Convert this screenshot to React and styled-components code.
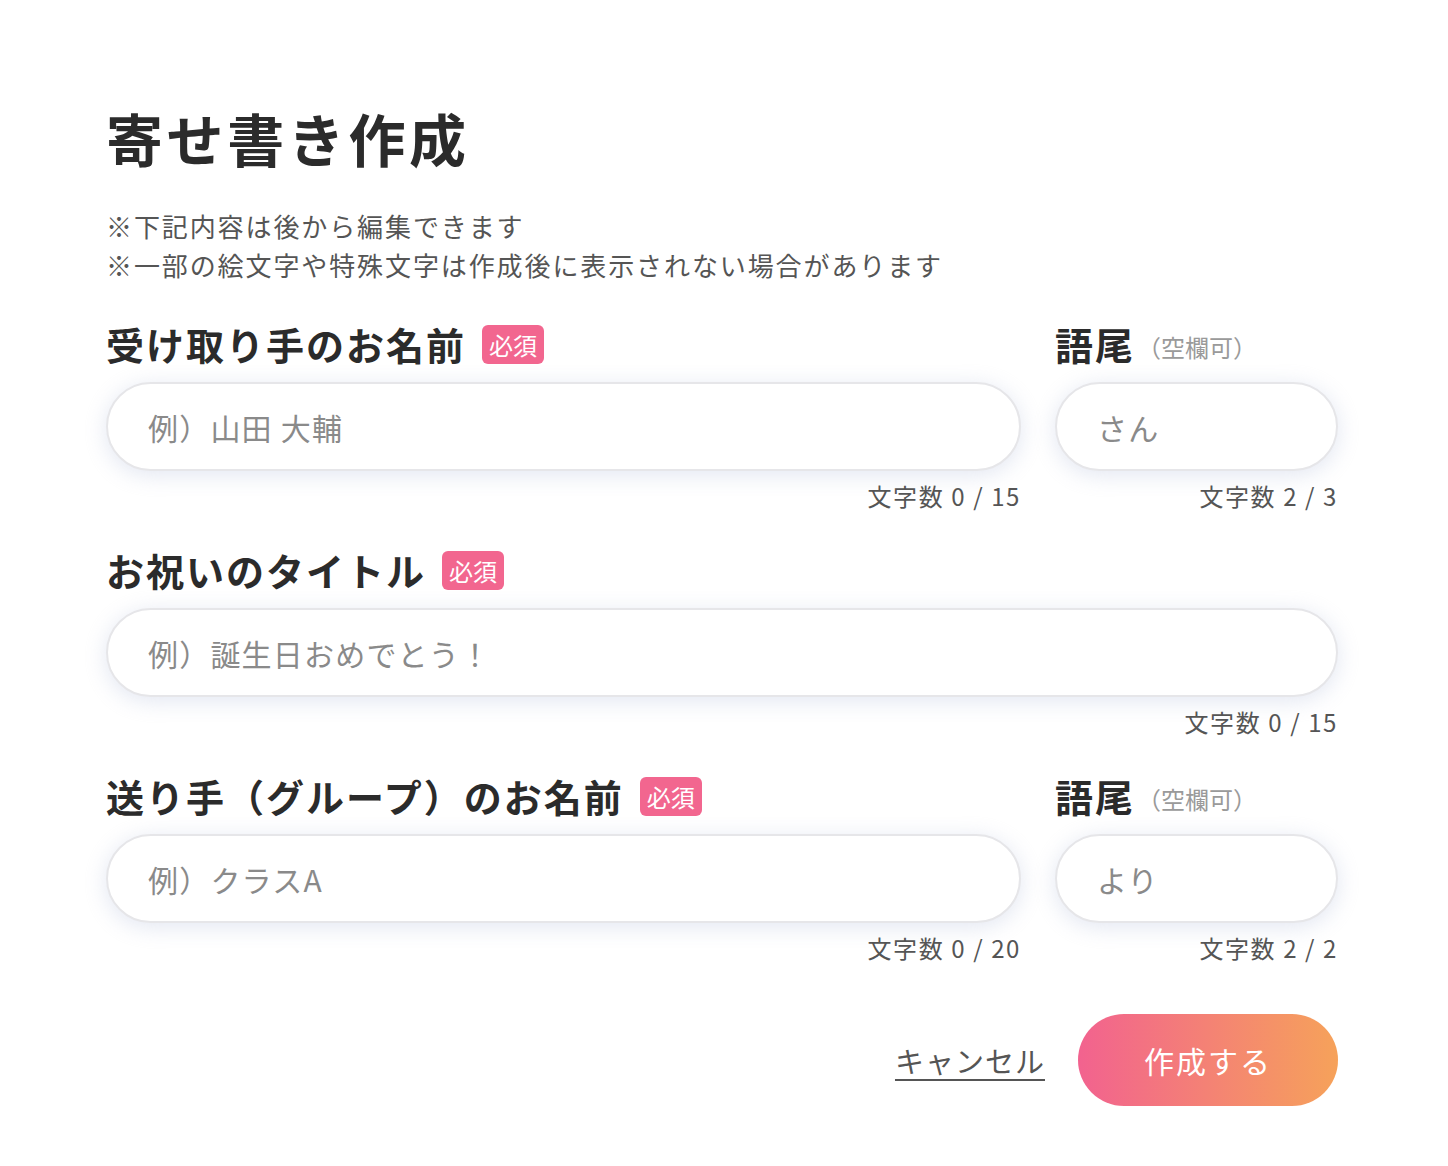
import React, { useState } from 'react';
import styled, { createGlobalStyle } from 'styled-components';

const GlobalStyle = createGlobalStyle`
  body {
    margin: 0;
    background: #ffffff;
    font-family: "Noto Sans CJK JP", "Noto Sans", sans-serif;
    color: #2b2b2b;
  }
`;

const Page = styled.div`
  padding: 102px 110px 60px 106px;
`;

const Title = styled.h1`
  margin: 0;
  font-size: 57px;
  line-height: 70px;
  font-weight: 700;
  letter-spacing: 3.6px;
  color: #2b2b2b;
`;

const Notes = styled.div`
  margin-top: 34px;
  font-size: 26px;
  line-height: 39px;
  letter-spacing: 1.9px;
  color: #555555;
`;

const Row = styled.div`
  display: flex;
  gap: 34px;
  margin-top: ${(p) => p.$top}px;
`;

const Field = styled.div`
  display: flex;
  flex-direction: column;
  flex: ${(p) => (p.$narrow ? '0 0 283px' : '1 1 auto')};
  min-width: 0;
`;

const LabelRow = styled.div`
  display: flex;
  align-items: center;
  height: 40px;
`;

const Label = styled.label`
  font-size: 38px;
  line-height: 40px;
  font-weight: 700;
  letter-spacing: 2px;
  color: #2b2b2b;
`;

const Badge = styled.span`
  margin-left: 16px;
  height: 39px;
  padding: 0 7px;
  display: inline-flex;
  align-items: center;
  border-radius: 6px;
  background: #f2668f;
  color: #ffffff;
  font-size: 24px;
  font-weight: 400;
`;

const Optional = styled.span`
  margin-left: 2px;
  margin-top: 4px;
  font-size: 24px;
  color: #9a9a9a;
`;

const Input = styled.input`
  margin-top: 18px;
  height: 89px;
  box-sizing: border-box;
  width: 100%;
  border: 2px solid #e6e6e9;
  border-radius: 45px;
  padding: 0 40px;
  font-family: inherit;
  font-size: 30px;
  letter-spacing: 1.2px;
  color: #2b2b2b;
  background: #ffffff;
  box-shadow: 0 4px 22px rgba(190, 200, 225, 0.45);
  outline: none;

  &::placeholder {
    color: #8a8a8a;
  }
`;

const Counter = styled.div`
  margin-top: 10px;
  text-align: right;
  font-size: 24px;
  line-height: 30px;
  letter-spacing: 1.6px;
  color: #555555;
`;

const Actions = styled.div`
  margin-top: 51px;
  display: flex;
  justify-content: flex-end;
  align-items: center;
  gap: 33px;
`;

const CancelLink = styled.button`
  background: none;
  border: none;
  padding: 0;
  font-family: inherit;
  font-size: 29px;
  letter-spacing: 1px;
  color: #555555;
  text-decoration: underline;
  text-underline-offset: 6px;
  text-decoration-thickness: 2px;
  cursor: pointer;
`;

const SubmitBtn = styled.button`
  width: 260px;
  height: 92px;
  border: none;
  border-radius: 46px;
  background: linear-gradient(90deg, #f2628f 0%, #f6a25a 100%);
  color: #ffffff;
  font-family: inherit;
  font-size: 30px;
  letter-spacing: 2px;
  cursor: pointer;
`;

function App() {
  const [name, setName] = useState('');
  const [suffix, setSuffix] = useState('');
  const [title, setTitle] = useState('');
  const [sender, setSender] = useState('');
  const [senderSuffix, setSenderSuffix] = useState('');

  return (
    <>
      <GlobalStyle />
      <Page>
        <Title>寄せ書き作成</Title>
        <Notes>
          <div>※下記内容は後から編集できます</div>
          <div>※一部の絵文字や特殊文字は作成後に表示されない場合があります</div>
        </Notes>

        <Row $top={40}>
          <Field>
            <LabelRow>
              <Label htmlFor="recipient">受け取り手のお名前</Label>
              <Badge>必須</Badge>
            </LabelRow>
            <Input
              id="recipient"
              placeholder="例）山田 大輔"
              value={name}
              onChange={(e) => setName(e.target.value)}
            />
            <Counter>文字数 {name.length} / 15</Counter>
          </Field>
          <Field $narrow>
            <LabelRow>
              <Label htmlFor="suffix">語尾</Label>
              <Optional>（空欄可）</Optional>
            </LabelRow>
            <Input
              id="suffix"
              placeholder="さん"
              value={suffix}
              onChange={(e) => setSuffix(e.target.value)}
            />
            <Counter>文字数 2 / 3</Counter>
          </Field>
        </Row>

        <Row $top={39}>
          <Field>
            <LabelRow>
              <Label htmlFor="title">お祝いのタイトル</Label>
              <Badge>必須</Badge>
            </LabelRow>
            <Input
              id="title"
              placeholder="例）誕生日おめでとう！"
              value={title}
              onChange={(e) => setTitle(e.target.value)}
            />
            <Counter>文字数 {title.length} / 15</Counter>
          </Field>
        </Row>

        <Row $top={39}>
          <Field>
            <LabelRow>
              <Label htmlFor="sender">送り手（グループ）のお名前</Label>
              <Badge>必須</Badge>
            </LabelRow>
            <Input
              id="sender"
              placeholder="例）クラスA"
              value={sender}
              onChange={(e) => setSender(e.target.value)}
            />
            <Counter>文字数 {sender.length} / 20</Counter>
          </Field>
          <Field $narrow>
            <LabelRow>
              <Label htmlFor="sender-suffix">語尾</Label>
              <Optional>（空欄可）</Optional>
            </LabelRow>
            <Input
              id="sender-suffix"
              placeholder="より"
              value={senderSuffix}
              onChange={(e) => setSenderSuffix(e.target.value)}
            />
            <Counter>文字数 2 / 2</Counter>
          </Field>
        </Row>

        <Actions>
          <CancelLink type="button">キャンセル</CancelLink>
          <SubmitBtn type="button">作成する</SubmitBtn>
        </Actions>
      </Page>
    </>
  );
}

export default App;
